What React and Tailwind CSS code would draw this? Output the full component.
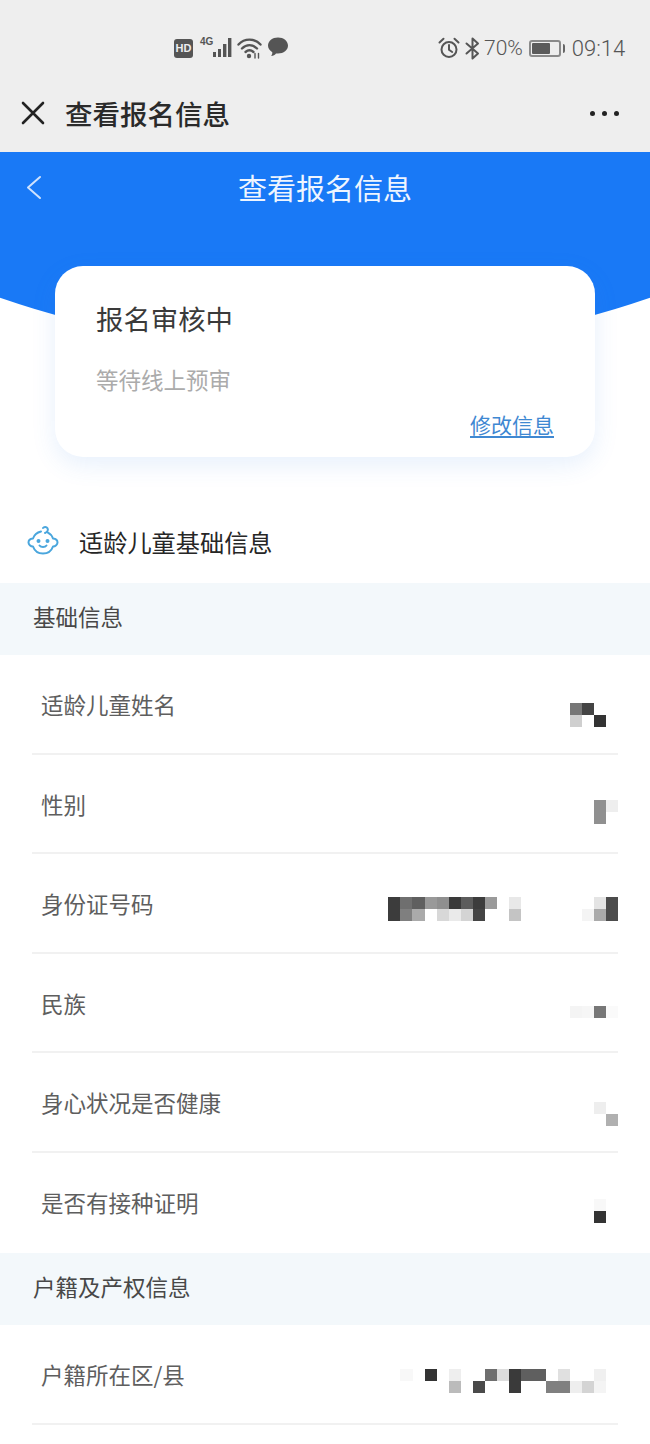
const FONT = "font-['Noto_Sans_CJK_SC','Noto_Sans',sans-serif]";

// pixelated values, one entry per cell: class name or empty
const mosaics = {
  name: {
    cols: 'grid-cols-[repeat(3,12.1px)]',
    cells: ['bg-[#777777]', 'bg-[#444444]', '', 'bg-[#cfcfcf]', '', 'bg-[#333333]'],
  },
  gender: {
    cols: 'grid-cols-[repeat(2,12.1px)]',
    cells: ['bg-[#909090]', 'bg-[#eeeeee]', 'bg-[#909090]', ''],
  },
  idCard: {
    cols: 'grid-cols-[repeat(19,12.1px)]',
    cells: [
      'bg-[#3c3c3c]', 'bg-[#6f6f6f]', 'bg-[#5f5f5f]', 'bg-[#999999]', 'bg-[#8f8f8f]', 'bg-[#3a3a3a]', 'bg-[#5c5c5c]', 'bg-[#3c3c3c]', 'bg-[#9a9a9a]', '',
      'bg-[#e8e8e8]', '', '', '', '', '', '', 'bg-[#e4e4e4]', 'bg-[#4c4c4c]',
      'bg-[#3c3c3c]', 'bg-[#7f7f7f]', 'bg-[#aaaaaa]', '', 'bg-[#d8d8d8]', 'bg-[#eaeaea]', 'bg-[#d4d4d4]', 'bg-[#444444]', '', '',
      'bg-[#c4c4c4]', '', '', '', '', '', 'bg-[#f4f4f4]', 'bg-[#aaaaaa]', 'bg-[#4c4c4c]',
    ],
  },
  nation: {
    cols: 'grid-cols-[repeat(4,12.1px)]',
    cells: ['bg-[#f4f4f4]', 'bg-[#f6f6f6]', 'bg-[#777777]', 'bg-[#fafafa]'],
  },
  health: {
    cols: 'grid-cols-[repeat(2,12.1px)]',
    cells: ['bg-[#eeeeee]', '', '', 'bg-[#b0b0b0]'],
  },
  vaccine: {
    cols: 'grid-cols-[repeat(1,12.1px)]',
    cells: ['bg-[#f8f8f8]', 'bg-[#333333]'],
  },
  hukou: {
    cols: 'grid-cols-[repeat(17,12.1px)]',
    cells: [
      'bg-[#f8f8f8]', '', 'bg-[#333333]', '', 'bg-[#eeeeee]', '', '', 'bg-[#6f6f6f]', 'bg-[#dddddd]', 'bg-[#3a3a3a]', 'bg-[#5f5f5f]', 'bg-[#5f5f5f]', '', 'bg-[#e0e0e0]', '', '', 'bg-[#f0f0f0]',
      '', '', '', '', 'bg-[#bbbbbb]', '', 'bg-[#4a4a4a]', '', '', 'bg-[#3a3a3a]', '', '', 'bg-[#808080]', 'bg-[#808080]', 'bg-[#eeeeee]', 'bg-[#d4d4d4]', 'bg-[#f4f4f4]',
    ],
  },
};

function Mosaic({ data, className }) {
  return (
    <div className={`grid auto-rows-[12px] ${data.cols} ${className}`}>
      {data.cells.map((c, i) => (
        <div key={i} className={c} />
      ))}
    </div>
  );
}

function Row({ label, mosaic, mosaicClass, divider = true }) {
  return (
    <div className="h-[99.6px] mx-[32px]">
      <div className={`h-full flex justify-between items-start pl-[9px] ${divider ? 'border-b-2 border-[#f1f1f1]' : ''}`}>
        <span className="mt-[33px] text-[22.5px] leading-[32px] text-[#5e5e5e]">{label}</span>
        <Mosaic data={mosaic} className={mosaicClass} />
      </div>
    </div>
  );
}

function Band({ title, className }) {
  return (
    <div className={`bg-[#f3f8fb] flex items-center pl-[33px] pb-[6px] ${className}`}>
      <span className="text-[22.5px] leading-[32px] text-[#484848]">{title}</span>
    </div>
  );
}

function StatusBar() {
  return (
    <div className="h-[88px] flex items-start pt-[34px] text-[#666666]">
      <div className="ml-[174px] mt-[5px] w-[19px] h-[19px] rounded-[3px] bg-[#555555] flex items-center justify-center">
        <span className="font-['Liberation_Sans',sans-serif] font-bold text-[11px] leading-none text-[#eeeeee]">HD</span>
      </div>
      <div className="relative ml-[7px] w-[34px] h-[24px]">
        <span className="absolute left-0 top-[3px] font-['Liberation_Sans',sans-serif] font-bold text-[10px] leading-none text-[#555555]">4G</span>
        <svg className="absolute left-[12px] top-[3px]" width="22" height="21" viewBox="0 0 22 21" fill="#555555">
          <rect x="1" y="15" width="3" height="5" />
          <rect x="6" y="12" width="3" height="8" />
          <rect x="11" y="7" width="3.4" height="13" />
          <rect x="16" y="1" width="3.4" height="19" />
        </svg>
      </div>
      <svg className="ml-[3px] mt-[3px]" width="26" height="22" viewBox="0 0 26 22" fill="none" stroke="#555555" strokeWidth="2.4" strokeLinecap="round">
        <path d="M1.5 7.5C7.5 1 17.5 1 23.5 7.5" />
        <path d="M5 11.5C9.5 7 15.5 7 20 11.5" />
        <path d="M8.5 15C11 12.8 14 12.8 16.5 15" />
        <circle cx="12" cy="19" r="2.2" fill="#555555" stroke="none" />
        <path d="M18 16.5V21M21.5 16.5V21" strokeWidth="1.4" />
      </svg>
      <svg className="ml-[4px] mt-[3px]" width="22" height="20" viewBox="0 0 22 20" fill="#555555">
        <path d="M11 0.5C16.6 0.5 21 4 21 8.6C21 13.2 16.6 16.6 11 16.6C10.3 16.6 9.6 16.5 9 16.4C8 17.6 6.3 18.8 4.2 19C5 17.8 5.4 16.4 5.3 15.2C2.6 13.8 1 11.4 1 8.6C1 4 5.4 0.5 11 0.5Z" />
      </svg>
      <svg className="ml-[149px] mt-[3px]" width="22" height="22" viewBox="0 0 22 22" fill="none" stroke="#555555" strokeWidth="2" strokeLinecap="round">
        <circle cx="11" cy="12.5" r="7.5" />
        <path d="M11 8V12.8L14.2 15" />
        <path d="M1.5 5.5L5.5 1.8M20.5 5.5L16.5 1.8" />
      </svg>
      <svg className="ml-[5px] mt-[3px]" width="15" height="23" viewBox="0 0 15 23" fill="none" stroke="#555555" strokeWidth="2" strokeLinecap="round" strokeLinejoin="round">
        <path d="M1.5 6.5L13 16.5L7.5 21.5V1.5L13 6.5L1.5 16.5" />
      </svg>
      <span className="ml-[4px] font-['Roboto',sans-serif] font-light text-[21px] leading-[28px] text-[#555555]">70%</span>
      <div className="ml-[6px] mt-[6px] w-[32px] h-[17px] rounded-[3px] border-2 border-[#8a8a8a] p-[1px]">
        <div className="h-full w-[68%] bg-[#5a5a5a] rounded-[1px]" />
      </div>
      <div className="ml-[2px] mt-[10px] w-[2px] h-[9px] bg-[#666666] rounded-r-sm" />
      <span className="ml-[7px] font-['Roboto',sans-serif] font-light text-[22px] leading-[30px] text-[#555555]">09:14</span>
    </div>
  );
}

function BabyIcon() {
  return (
    <svg width="32" height="32" viewBox="0 0 32 32" fill="none" stroke="#4aa6dd" strokeWidth="2" strokeLinecap="round" strokeLinejoin="round">
      <path d="M18 8C20.5 7 21.5 5 20.5 3.2C19.5 1.6 17 1.5 16 3" />
      <path d="M14 6.5C10 7.5 7 10.5 6 13.5C3.5 13.8 1.5 15.5 1.5 17.5C1.5 19.5 3.5 21.5 6 21.5C7.5 25.8 11.5 28.5 16 28.5C20.5 28.5 24.5 25.8 26 21.5C28.5 21.5 30.5 19.5 30.5 17.5C30.5 15.5 28.5 13.8 26 13.5C25.2 11 23 8.5 20.5 7.3" />
      <circle cx="11.5" cy="16" r="1" fill="#4aa6dd" />
      <circle cx="20.5" cy="16" r="1" fill="#4aa6dd" />
      <path d="M12.5 20.5C14 22.5 18 22.5 19.5 20.5" />
    </svg>
  );
}

export default function App() {
  return (
    <div className={`w-[650px] min-h-[1444px] bg-white ${FONT}`}>
      <div className="bg-[#eeeeee] h-[152px]">
        <StatusBar />
        <div className="h-[50px] flex items-center">
          <svg className="ml-[21px] shrink-0" width="24" height="24" viewBox="0 0 24 24" fill="none" stroke="#222222" strokeWidth="2.6" strokeLinecap="round">
            <path d="M2 2L22 22M22 2L2 22" />
          </svg>
          <span className="ml-[20px] font-medium text-[27.5px] leading-[40px] text-[#2a2a2a]">查看报名信息</span>
          <div className="ml-auto mr-[31px] flex gap-[7px]">
            <div className="w-[5px] h-[5px] rounded-full bg-[#222222]" />
            <div className="w-[5px] h-[5px] rounded-full bg-[#222222]" />
            <div className="w-[5px] h-[5px] rounded-full bg-[#222222]" />
          </div>
        </div>
      </div>

      <div className="relative pt-[114px] pb-[60px]">
        {/* curved blue backdrop behind the card */}
        <div className="absolute inset-x-0 top-0 h-[200px] overflow-hidden">
          <div className="absolute bottom-0 left-1/2 -translate-x-1/2 w-[2000px] h-[2000px] rounded-full bg-[#1979f6]" />
        </div>
        <div className="absolute inset-x-0 top-0 h-[70px] flex items-center justify-center">
          <svg className="absolute left-[25px] top-[23px]" width="17" height="25" viewBox="0 0 17 25" fill="none" stroke="#cfe2fd" strokeWidth="2" strokeLinecap="round" strokeLinejoin="round">
            <path d="M15 2L3 12.5L15 23" />
          </svg>
          <span className="text-[29px] leading-[40px] text-[#eef5ff]">查看报名信息</span>
        </div>
        <div className="relative mx-[55px] h-[191px] rounded-[28px] bg-white shadow-[0_8px_24px_rgba(60,130,230,0.12)] pl-[41px] pr-[41px] pt-[32px]">
          <div className="text-[27.4px] leading-[40px] text-[#3a3a3a]">报名审核中</div>
          <div className="mt-[25px] text-[22.5px] leading-[32px] text-[#ababab]">等待线上预审</div>
          <div className="mt-[13px] text-right">
            <span className="text-[21px] leading-[32px] text-[#3f88d2] underline underline-offset-[3px]">修改信息</span>
          </div>
        </div>
      </div>

      <div className="h-[66px] flex items-start pl-[27px] pt-[8px]">
        <BabyIcon />
        <span className="ml-[20px] text-[24.2px] leading-[34px] text-[#262626]">适龄儿童基础信息</span>
      </div>

      <Band title="基础信息" className="h-[72px]" />
      <Row label="适龄儿童姓名" mosaic={mosaics.name} mosaicClass="mt-[48px] mr-[12px]" />
      <Row label="性别" mosaic={mosaics.gender} mosaicClass="mt-[45px]" />
      <Row label="身份证号码" mosaic={mosaics.idCard} mosaicClass="mt-[43px]" />
      <Row label="民族" mosaic={mosaics.nation} mosaicClass="mt-[52px]" />
      <Row label="身心状况是否健康" mosaic={mosaics.health} mosaicClass="mt-[49px]" />
      <Row label="是否有接种证明" mosaic={mosaics.vaccine} mosaicClass="mt-[46px] mr-[12px]" divider={false} />

      <Band title="户籍及产权信息" className="h-[72.4px]" />
      <Row label="户籍所在区/县" mosaic={mosaics.hukou} mosaicClass="mt-[44px] mr-[12px]" />
    </div>
  );
}
